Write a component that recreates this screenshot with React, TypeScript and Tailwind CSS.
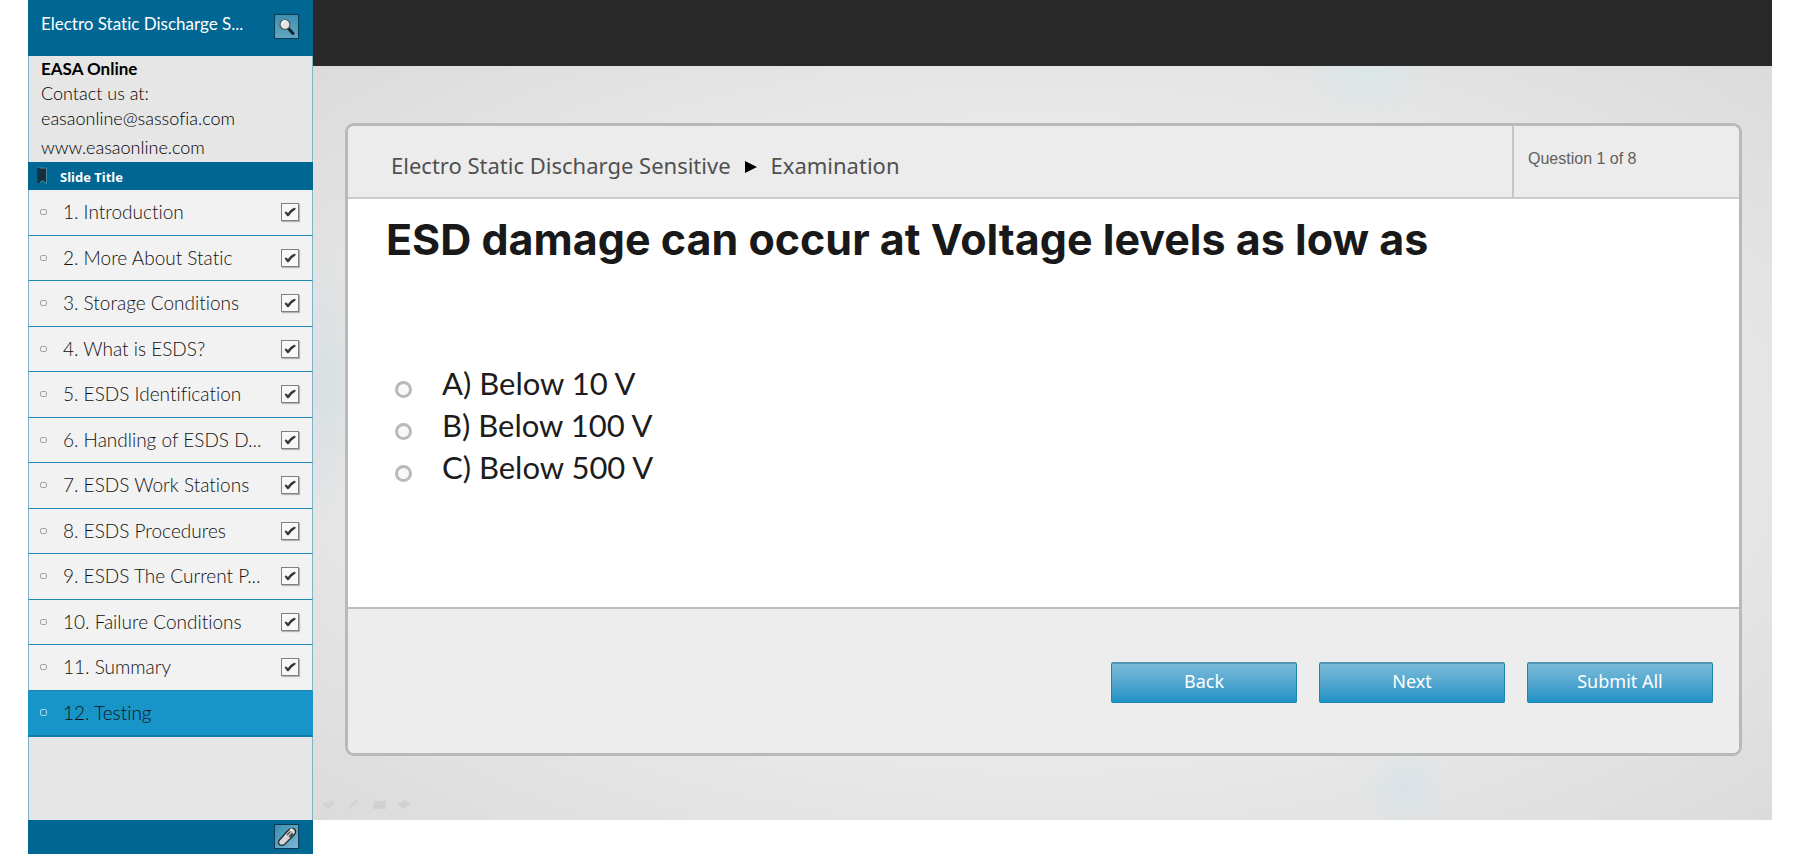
import { useState } from 'react';

type Slide = { title: string; label: string };

const slides: Slide[] = [
  { title: 'Introduction', label: '1. Introduction' },
  { title: 'More About Static', label: '2. More About Static' },
  { title: 'Storage Conditions', label: '3. Storage Conditions' },
  { title: 'What is ESDS?', label: '4. What is ESDS?' },
  { title: 'ESDS Identification', label: '5. ESDS Identification' },
  { title: 'Handling of ESDS D...', label: '6. Handling of ESDS D...' },
  { title: 'ESDS Work Stations', label: '7. ESDS Work Stations' },
  { title: 'ESDS Procedures', label: '8. ESDS Procedures' },
  { title: 'ESDS The Current P...', label: '9. ESDS The Current P...' },
  { title: 'Failure Conditions', label: '10. Failure Conditions' },
  { title: 'Summary', label: '11. Summary' },
  { title: 'Testing', label: '12. Testing' },
];

const answers = ['A) Below 10 V', 'B) Below 100 V', 'C) Below 500 V'];

function SearchIcon() {
  return (
    <svg viewBox="0 0 24 24" className="h-6 w-6">
      <path d="M13.500 13.500l4.500 5" stroke="#16222a" strokeWidth="3" strokeLinecap="round" />
      <circle cx="10" cy="9.500" r="5" fill="#e9e4e4" stroke="#4b5a62" strokeWidth="1.2" />
      <path d="M7 9a3.200 3.200 0 0 1 3-3" fill="none" stroke="#ffffff" strokeWidth="1.4" />
    </svg>
  );
}

function PaperclipIcon() {
  return (
    <svg viewBox="0 0 24 24" className="h-6 w-6">
      <path
        d="M4 15.500L12.500 6Q16 2 19.500 4Q22 7 19 10L10 19Q6.500 21.500 4.300 19.500Q2.800 17.800 4 15.500Z"
        fill="#d9d4d4"
        stroke="#1c2a31"
        strokeWidth="1.3"
      />
      <path d="M11.500 9.500L15 6L19 9.500L15.500 13Z" fill="#4a5154" />
      <path d="M13 11L17 6.500" stroke="#c9c6c6" strokeWidth="1.200" />
      <circle cx="16.500" cy="4.800" r="1.500" fill="#f3efc4" />
    </svg>
  );
}

function BookmarkIcon() {
  return (
    <svg viewBox="0 0 12 18" className="h-[18px] w-3">
      <path d="M2.500 1H10.500V16.500L6.500 13.500L2.500 16.500Z" fill="#15303c" stroke="#4b87a0" strokeWidth="1" />
      <path d="M1 1h3v15.500L1.500 16Z" fill="#16313d" />
    </svg>
  );
}

function PresenterMarks() {
  return (
    <svg viewBox="0 0 94 14" className="h-[14px] w-[94px]" fill="#d1d1d1">
      <path d="M1 5h8V2l5 2-6 7-5-3Z" />
      <path d="M26 11l9-9 2 1-8 8Z" />
      <path d="M53 3h12v8H52Z" />
      <path d="M77 5h5V1l8 5-8 5-4-3Z" />
    </svg>
  );
}

function Sidebar() {
  return (
    <aside className="flex w-[285px] shrink-0 flex-col font-['Lato',sans-serif] [font-variant-ligatures:no-common-ligatures]">
      <header className="flex h-14 shrink-0 items-start justify-between bg-[#006794] pl-[13px] pr-[14px] pt-[14px] text-white">
        <h1 className="text-[17px] leading-5">Electro Static Discharge S...</h1>
        <button
          type="button"
          aria-label="Search"
          className="h-[25px] w-[25px] border border-[#0b3c52] bg-linear-to-b from-[#3f8fb2] to-[#5fa6c2]"
        >
          <SearchIcon />
        </button>
      </header>

      <div className="h-[106px] border-x border-[#7fb3cb] bg-[#e6e6e6] pl-3 text-[18px] leading-[25px] font-light text-black">
        <p className="text-[17px] font-bold">EASA Online</p>
        <p>Contact us at:</p>
        <p>easaonline@sassofia.com</p>
        <p className="pt-1">www.easaonline.com</p>
      </div>
      <div className="flex h-7 items-center gap-3 bg-[#006794] pl-2 font-['Noto_Sans',sans-serif] text-[13px] font-bold text-white">
        <BookmarkIcon />
        <h2 className="pt-[3px]">Slide Title</h2>
      </div>
      <ol className="flex flex-1 flex-col">
        {slides.map((slide, i) => {
          const current = i === slides.length - 1;
          return (
            <li
              key={slide.label}
              className={
                current
                  ? 'flex flex-1 items-center border-x border-b-2 border-[#0e7ba8] border-x-[#1795c8] bg-[#1795c8]'
                  : 'flex flex-1 items-center border-x border-b border-[#1f86b4] border-x-[#7fb3cb] bg-[#f2f2f2]'
              }
            >
              <a
                href={`#slide-${i + 1}`}
                className="flex flex-1 items-center gap-4 pl-[11px] text-[19px] leading-6 font-light text-[#111111]"
              >
                <span
                  className={
                    current
                      ? 'h-[7px] w-[7px] rounded-[2px] border border-[#a8d8ec]'
                      : 'h-[6px] w-[7px] rounded-[2px] border border-[#a3a3a3]'
                  }
                />
                {slide.label}
              </a>
              {!current && (
                <span className="mr-[13px] grid">
                  <input
                    type="checkbox"
                    defaultChecked
                    aria-label={`${slide.title} completed`}
                    className="peer col-start-1 row-start-1 h-[18px] w-[18px] appearance-none border border-[#808080] bg-[#f8f8f8] shadow-[1px_1px_1px_#b5b5b5]"
                  />
                  <svg
                    viewBox="0 0 18 18"
                    className="pointer-events-none invisible col-start-1 row-start-1 h-[18px] w-[18px] peer-checked:visible"
                  >
                    <path
                      d="M4 9.500L6.500 13L8 12.500L10 9.500L14.500 6L13.500 5L10 7L7 10.500L5 8.800Z"
                      fill="#333333"
                      stroke="#333333"
                      strokeWidth=".8"
                    />
                  </svg>
                </span>
              )}
            </li>
          );
        })}
      </ol>
      <div className="h-[83px] border-x border-[#7fb3cb] bg-[#e6e6e6]" />

      <footer className="flex h-[34px] shrink-0 justify-end bg-[#006794] pr-[14px] pt-1">
        <button
          type="button"
          aria-label="Attachments"
          className="h-[25px] w-[25px] border border-[#0b3c52] bg-linear-to-br from-[#3a8db2] to-[#7bb9d1]"
        >
          <PaperclipIcon />
        </button>
      </footer>
    </aside>
  );
}

function ActionButton({ children }: { children: string }) {
  return (
    <button
      type="button"
      className="h-[41px] w-[186px] rounded-[2px] border border-t-2 border-[#1c86b3] border-t-[#4d97b5] bg-linear-to-b from-[#79bbd8] to-[#1b92c6] pb-1 text-[18px] leading-6 text-white"
    >
      {children}
    </button>
  );
}

export default function App() {
  const [answer, setAnswer] = useState('');

  return (
    <div className="flex min-h-screen bg-white pl-7 pr-[26px]">
      <Sidebar />
      <main className="mb-[34px] flex flex-1 flex-col">
        <div className="h-[66px] bg-[#292929]" />
        <section className="flex flex-1 flex-col bg-[radial-gradient(ellipse_70px_50px_at_1055px_6px,#dce6e8,transparent),radial-gradient(circle_46px_at_1092px_722px,#d9e3e8,transparent),radial-gradient(ellipse_40px_140px_at_12px_320px,#d8dfe2,transparent),radial-gradient(ellipse_at_center,#f2f2f2_0%,#ececec_50%,#dbdbdb_100%)] pl-8 pr-[30px] pt-[57px] font-['Noto_Sans',sans-serif]">
          <article className="flex flex-1 flex-col overflow-hidden rounded-[9px] border-[3px] border-[#b9b9b9] bg-white">
            <header className="flex h-[73px] border-b-2 border-[#cbcbcb] bg-[#ececec]">
              <nav className="flex flex-1 items-center pl-[43px] pt-[7px] text-[22px] text-[#505050]">
                <span>Electro Static Discharge Sensitive</span>
                <svg viewBox="0 0 12 12" className="ml-[14px] mr-[14px] mt-1 h-3 w-3">
                  <path d="M0 0L12 6L0 12Z" fill="#000000" />
                </svg>
                <span>Examination</span>
              </nav>
              <p className="w-[227px] border-l-2 border-[#c6c6c6] pl-[14px] pt-[21px] font-['Liberation_Sans',sans-serif] text-[16px] leading-6 text-[#606060]">
                Question 1 of 8
              </p>
            </header>

            <fieldset className="flex-1 pl-[38px] text-[#1c1c1c]">
              <legend className="pt-[13px] font-['Inter',sans-serif] text-[43px] leading-[54px] font-bold text-[#191919]">
                ESD damage can occur at Voltage levels as low as
              </legend>
              <div className="mt-24 font-['Lato',sans-serif] text-[31px] leading-[42px]">
                {answers.map((text) => (
                  <label key={text} className="flex items-center gap-[30px] pl-[9px]">
                    <input
                      type="radio"
                      name="answer"
                      value={text}
                      checked={answer === text}
                      onChange={() => setAnswer(text)}
                      className="mt-3 h-[17px] w-[17px] appearance-none rounded-full border-[3px] border-[#b9b9b9] bg-[#f8f8f8] checked:bg-[#333333]"
                    />
                    {text}
                  </label>
                ))}
              </div>
            </fieldset>

            <footer className="flex h-[146px] items-start justify-end gap-[22px] border-t-2 border-[#bcbcbc] bg-[#ededed] pr-[26px] pt-[53px]">
              <ActionButton>Back</ActionButton>
              <ActionButton>Next</ActionButton>
              <ActionButton>Submit All</ActionButton>
            </footer>
          </article>
          <div className="-ml-6 flex h-16 items-end pb-2">
            <PresenterMarks />
          </div>
        </section>
      </main>
    </div>
  );
}
